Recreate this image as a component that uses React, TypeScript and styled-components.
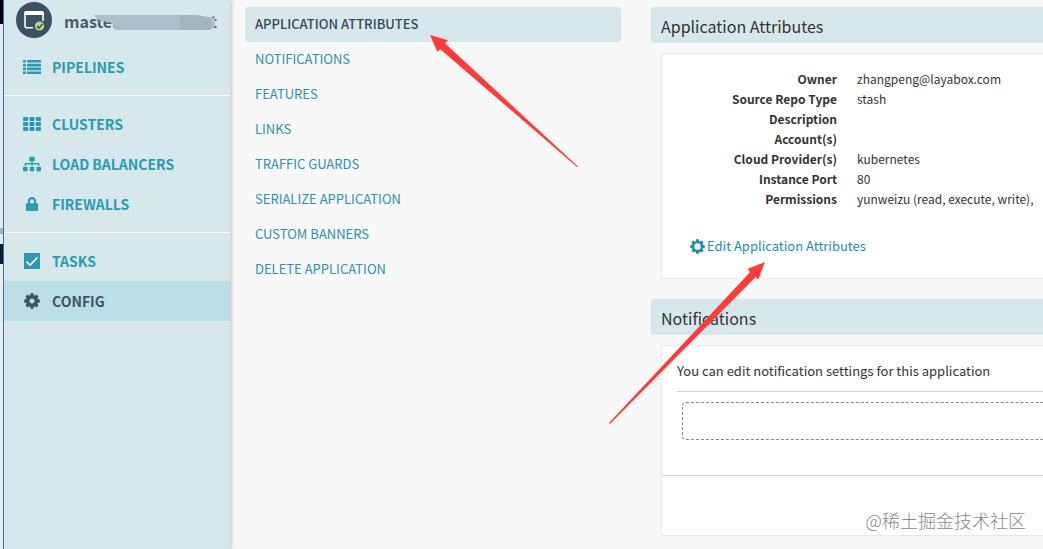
import React from "react";
import styled, { createGlobalStyle } from "styled-components";
import { FaSitemap, FaLock } from "react-icons/fa";

const Global = createGlobalStyle`
  * { box-sizing: border-box; }
  body { margin: 0; background: #f8f8f8; color: #333; overflow-x: hidden;
    font-family: "Noto Sans CJK SC", "Liberation Sans", sans-serif; font-size: 13px; line-height: 20px; }
`;
const Page = styled.div`
  position: relative; display: flex; min-height: 100vh; overflow: hidden;
`;
const Edge = styled.div`
  flex: 0 0 4px; border-right: 1px solid #2a7fc9;
  background: linear-gradient(#000 0 24px, #e9eef2 24px 228px, #a9b2bb 228px 234px, #e9eef2 234px 244px, #101a2c 244px 264px, #eef0f1 264px);
`;
const Sidebar = styled.aside`
  flex: 0 0 226px; background: #d7e8ed; box-shadow: 1px 0 4px rgba(0, 0, 0, 0.25); z-index: 1;
`;
const AppHead = styled.div`
  height: 47px; padding: 2px 13px 0 12px; display: flex; gap: 12px;
`;
const NameBox = styled.h2`
  position: relative; flex: 1; margin: 0; display: flex; justify-content: space-between;
  font-size: 16px; font-weight: 700; line-height: 38px; color: #4a5c69;
`;
const Redaction = styled.svg`
  position: absolute; left: 30px; top: 13px;
`;
const NavGroup = styled.nav`
  & + & { border-top: 1px solid #fff; margin-top: 8px; padding-top: 8px; }
`;
const NavItem = styled.a<{ $active?: boolean }>`
  height: 40px; padding-left: 19px; display: flex; align-items: center; gap: 11px;
  font-size: 14px; font-weight: 700; text-decoration: none;
  color: ${(p) => (p.$active ? "#3b5564" : "#289bb2")};
  background: ${(p) => (p.$active ? "#bbdfe6" : "transparent")};
  svg { width: 18px; flex: none; }
`;
const Main = styled.main`
  flex: 1; min-width: 0; display: flex; gap: 30px; padding: 7px 0 0 15px;
`;
const Tabs = styled.nav`
  flex: 0 0 376px;
`;
const Tab = styled.a<{ $active?: boolean }>`
  display: block; padding: 0 10px 2px; line-height: 33px; border-radius: 2px; text-decoration: none;
  font-weight: ${(p) => (p.$active ? 500 : 400)};
  color: ${(p) => (p.$active ? "#344959" : "#2f91a5")};
  background: ${(p) => (p.$active ? "#d7e8ed" : "transparent")};
`;
const Content = styled.div`
  flex: 1; min-width: 0; display: flex; flex-direction: column; gap: 20px;
`;
const Title = styled.h3`
  margin: 0 0 10px; padding: 2px 10px 0; font-size: 16px; font-weight: 400; line-height: 34px;
  background: #d7e8ed; border-radius: 2px 0 0 2px;
`;
const Card = styled.div`
  margin-left: 10px; background: #fff; border: 1px solid #e8e8e8; border-right: 0;
`;
const Attributes = styled.dl`
  margin: 0; padding: 15px 0 0; display: grid; grid-template-columns: 175px max-content; column-gap: 20px;
  font-size: 12px;
  dt { font-weight: 700; text-align: right; }
  dd { margin: 0; }
`;
const EditLink = styled.a`
  display: flex; align-items: center; gap: 2px; margin: 27px 0 22px 28px;
  color: #1f8ea5; text-decoration: none;
`;
const Intro = styled.p`
  margin: 15px 0 0 15px; padding-bottom: 10px; border-bottom: 1px solid #d4d4d4;
`;
const DropZone = styled.div`
  height: 38px; margin: 10px 0 35px 20px; border: 1px dashed #888; border-right: 0; border-radius: 4px 0 0 4px;
`;
const Footer = styled.div`
  height: 60px; border-top: 1px solid #d4d4d4;
`;
const Arrows = styled.svg`
  position: absolute; left: 0; top: 0; z-index: 2; pointer-events: none;
`;
const Watermark = styled.span`
  position: absolute; right: 17px; top: 508px; z-index: 2; font-size: 18px; line-height: 24px; font-weight: 300; color: #888;
`;

const ListIcon = () => (
  <svg width="18" height="14" viewBox="0 0 18 14" fill="currentColor">
    {[0, 3.8, 7.6, 11.4].map((y) => (
      <g key={y}>
        <rect x="0" y={y} width="3" height="2.600" rx="0.500" />
        <rect x="4" y={y} width="14" height="2.600" rx="0.500" />
      </g>
    ))}
  </svg>
);
const GridIcon = () => (
  <svg width="18" height="14" viewBox="0 0 18 14" fill="currentColor">
    {[0, 5, 10].map((y) => [0, 6.4, 12.8].map((x) => <rect key={x + "-" + y} x={x} y={y} width="5.200" height="4" rx="1" />))}
  </svg>
);
const TaskIcon = () => (
  <svg width="18" height="16" viewBox="0 0 18 16">
    <rect x="1" width="16" height="16" fill="currentColor" />
    <path d="M3.500 8.500l3.500 3.500l7.500-7.500" fill="none" stroke="#fff" strokeWidth="1.600" />
  </svg>
);
const GearIcon = ({ size, ring }: { size: number; ring: number }) => (
  <svg width={size} height={size} viewBox="-8 -8 16 16" fill="currentColor">
    <circle r={6 - ring / 2} fill="none" stroke="currentColor" strokeWidth={ring} />
    {[0, 45, 90, 135, 180, 225, 270, 315].map((a) => (
      <path key={a} transform={`rotate(${a})`} d="M-2-5L-1.400-7.800H1.400L2-5Z" />
    ))}
  </svg>
);
const Avatar = () => (
  <svg width="36" height="36" viewBox="0 0 36 36">
    <circle cx="18" cy="18" r="18" fill="#3c5264" />
    <path d="M17 25.800H11a2 2 0 0 1-2-2V11M27 11v8" fill="none" stroke="#fff" strokeWidth="1.600" />
    <path d="M8 13V11a2 2 0 0 1 2-2H26a2 2 0 0 1 2 2V13Z" fill="#fff" />
    <circle cx="23.500" cy="24" r="4.600" fill="#b5d884" />
    <path d="M21 24l2 2l3.500-4" fill="none" stroke="#3c5264" strokeWidth="1.600" />
  </svg>
);

const groups = [
  [{ label: "PIPELINES", icon: <ListIcon /> }],
  [
    { label: "CLUSTERS", icon: <GridIcon /> },
    { label: "LOAD BALANCERS", icon: <FaSitemap size={18} /> },
    { label: "FIREWALLS", icon: <FaLock size={14} /> },
  ],
  [
    { label: "TASKS", icon: <TaskIcon /> },
    { label: "CONFIG", icon: <GearIcon size={16} ring={3.4} />, active: true },
  ],
];
const tabs = ["APPLICATION ATTRIBUTES", "NOTIFICATIONS", "FEATURES", "LINKS", "TRAFFIC GUARDS", "SERIALIZE APPLICATION", "CUSTOM BANNERS", "DELETE APPLICATION"];
const attributes = [
  ["Owner", "zhangpeng@layabox.com"],
  ["Source Repo Type", "stash"],
  ["Description", ""],
  ["Account(s)", ""],
  ["Cloud Provider(s)", "kubernetes"],
  ["Instance Port", "80"],
  ["Permissions", "yunweizu (read, execute, write),"],
];

export default function App() {
  return (
    <Page>
      <Global />
      <Edge />
      <Sidebar>
        <AppHead>
          <Avatar />
          <NameBox>
            <span>master</span>
            <span>t</span>
            <Redaction width="122" height="15" viewBox="0 0 122 15">
              <path d="M0 0H102L121 3V12L116 15H21L19 8L4 5Z" fill="#adbfc8" />
              <path d="M86 0H102L117 3V12L115 15H86Z" fill="#a3b4bd" />
            </Redaction>
          </NameBox>
        </AppHead>
        {groups.map((items, i) => (
          <NavGroup key={i}>
            {items.map((it: { label: string; icon: React.ReactNode; active?: boolean }) => (
              <NavItem key={it.label} href="#" $active={it.active}>
                {it.icon}
                {it.label}
              </NavItem>
            ))}
          </NavGroup>
        ))}
      </Sidebar>
      <Main>
        <Tabs>
          {tabs.map((t, i) => (
            <Tab key={t} href="#" $active={i === 0}>{t}</Tab>
          ))}
        </Tabs>
        <Content>
          <section>
            <Title>Application Attributes</Title>
            <Card>
              <Attributes>
                {attributes.map(([k, v]) => (
                  <React.Fragment key={k}>
                    <dt>{k}</dt>
                    <dd>{v}</dd>
                  </React.Fragment>
                ))}
              </Attributes>
              <EditLink href="#">
                <GearIcon size={15} ring={2.6} />
                Edit Application Attributes
              </EditLink>
            </Card>
          </section>
          <section>
            <Title>Notifications</Title>
            <Card>
              <Intro>You can edit notification settings for this application</Intro>
              <DropZone />
              <Footer />
            </Card>
          </section>
        </Content>
      </Main>
      <Arrows width="800" height="440" viewBox="0 0 800 440" fill="#fd3b3a">
        <path d="M430 35L448 40.300L445 43.300L578 166.500L577 167L440.300 49.300L437.300 51.700Z" />
        <path d="M765 262L747.700 268.700L750 272.300L609 423L610 424L755.700 277L758.300 279.500Z" />
      </Arrows>
      <Watermark>@稀土掘金技术社区</Watermark>
    </Page>
  );
}
